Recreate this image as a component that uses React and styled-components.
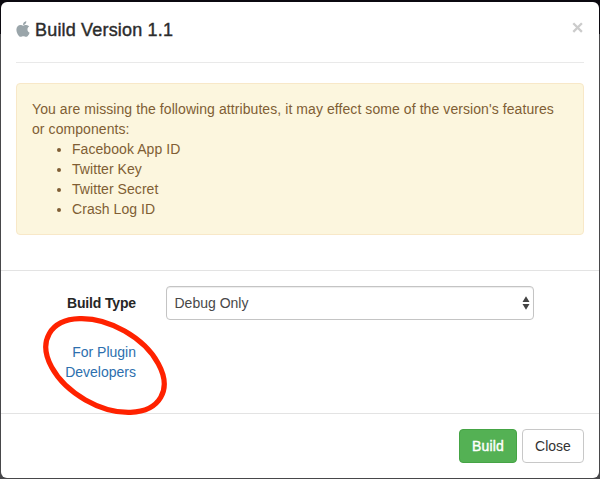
import React from "react";
import styled, { createGlobalStyle } from "styled-components";
import { FaApple } from "react-icons/fa";

const GlobalStyle = createGlobalStyle`
  *, *::before, *::after { box-sizing: border-box; }
  html, body { margin: 0; padding: 0; }
  body {
    font-family: "Liberation Sans", Arial, sans-serif;
    font-size: 14px;
    line-height: 20px;
    color: #333;
    overflow: hidden;
  }
`;

const Backdrop = styled.div`
  width: 600px;
  height: 479px;
  padding: 2px 1px 1px;
  background: linear-gradient(#0b0910 0 34px, #47474a 34px);
`;

const Modal = styled.div`
  position: relative;
  display: flex;
  flex-direction: column;
  width: 598px;
  height: 476px;
  background: #fff;
  border-radius: 6px;
`;

const Header = styled.header`
  display: flex;
  justify-content: space-between;
  height: 61px;
  margin: 0 15px;
  padding-top: 18px;
  border-bottom: 1px solid #e9e9e9;
`;

const Title = styled.h4`
  display: flex;
  margin: 0;
  font-size: 18px;
  line-height: 20px;
  font-weight: 400;
  color: #2c2c2c;
  letter-spacing: 0.18px;
  -webkit-text-stroke: 0.4px #2c2c2c;
`;

const AppleIcon = styled(FaApple)`
  width: 16px;
  height: 18px;
  margin: 0 4px 0 -1px;
  color: #9aa5aa;
`;

const CloseIcon = styled.button`
  display: flex;
  width: 12px;
  height: 16px;
  padding: 0;
  border: 0;
  background: none;
  color: #ccc;
`;

const Alert = styled.section`
  height: 152px;
  margin: 20px 15px 35px;
  padding: 15px;
  border: 1px solid #f8e8c8;
  border-radius: 4px;
  background: #fcf6de;
  color: #805e34;
`;

const Message = styled.p`
  margin: 0;
  letter-spacing: 0.075px;
`;

const Attributes = styled.ul`
  margin: 0;
  padding-left: 40px;
  letter-spacing: 0.06px;
`;

const Form = styled.form`
  display: grid;
  grid-template-columns: 120px 368px;
  column-gap: 30px;
  grid-template-rows: 34px 40px;
  row-gap: 22px;
  height: 143px;
  padding: 15px 0 0 15px;
  border-top: 1px solid #e3e3e3;
`;

const Label = styled.label`
  padding-top: 7px;
  text-align: right;
  font-weight: 700;
  letter-spacing: -0.15px;
  color: #262626;
`;

const Select = styled.div`
  display: flex;
  align-items: center;
  justify-content: space-between;
  height: 34px;
  padding: 0 3px 0 7.5px;
  border: 1px solid #c4c4c4;
  border-radius: 4px;
  box-shadow: inset 0 1px 1px rgba(0, 0, 0, 0.075);
  color: #484848;
`;

const Link = styled.a`
  color: #2d6fae;
  text-align: right;
  text-decoration: none;
`;

const Footer = styled.footer`
  display: flex;
  justify-content: flex-end;
  gap: 5px;
  height: 65px;
  padding: 15px;
  border-top: 1px solid #e3e3e3;
`;

const Button = styled.button`
  width: ${(p) => (p.$primary ? "58px" : "62px")};
  height: 34px;
  padding: 0;
  border: 1px solid ${(p) => (p.$primary ? "#45a445" : "#c8c8c8")};
  border-radius: 4px;
  background: ${(p) => (p.$primary ? "#54b154" : "#fff")};
  color: ${(p) => (p.$primary ? "#fff" : "#333")};
  -webkit-text-stroke: ${(p) => (p.$primary ? "0.4px #fff" : "0")};
  font: inherit;
  line-height: 20px;
  letter-spacing: ${(p) => (p.$primary ? "0.2px" : "0")};
`;

const Highlight = styled.svg`
  position: absolute;
  left: 39px;
  top: 308px;
  width: 130px;
  height: 110px;
  pointer-events: none;
`;

const missing = ["Facebook App ID", "Twitter Key", "Twitter Secret", "Crash Log ID"];

export default function App() {
  return (
    <>
      <GlobalStyle />
      <Backdrop>
        <Modal role="dialog" aria-label="Build Version 1.1">
          <Header>
            <Title>
              <AppleIcon />
              Build Version 1.1
            </Title>
            <CloseIcon aria-label="Dismiss">
              <svg width="12" height="16" viewBox="0 0 12 16">
                <path d="M1.3 3.3 9.9 11.9M9.9 3.3 1.3 11.9" stroke="currentColor" strokeWidth="2.3" />
              </svg>
            </CloseIcon>
          </Header>
          <Alert>
            <Message>
              You are missing the following attributes, it may effect some of the version's features
              <br />
              or components:
            </Message>
            <Attributes>
              {missing.map((name) => (
                <li key={name}>{name}</li>
              ))}
            </Attributes>
          </Alert>
          <Form>
            <Label>Build Type</Label>
            <Select role="combobox">
              Debug Only
              <svg width="8" height="14" viewBox="0 0 8 14" fill="#444">
                <path d="M4 .3 7.5 5.9H.5zM4 13.7 7.5 8.1H.5z" />
              </svg>
            </Select>
            <Link>
              For Plugin
              <br />
              Developers
            </Link>
          </Form>
          <Footer>
            <Button $primary>Build</Button>
            <Button>Close</Button>
          </Footer>
          <Highlight viewBox="40 310 130 110">
            <ellipse
              cx="105"
              cy="365.5"
              rx="64.2"
              ry="39.6"
              transform="rotate(29.7 105 365.5)"
              fill="none"
              stroke="#ff2200"
              strokeWidth="5.2"
            />
          </Highlight>
        </Modal>
      </Backdrop>
    </>
  );
}
